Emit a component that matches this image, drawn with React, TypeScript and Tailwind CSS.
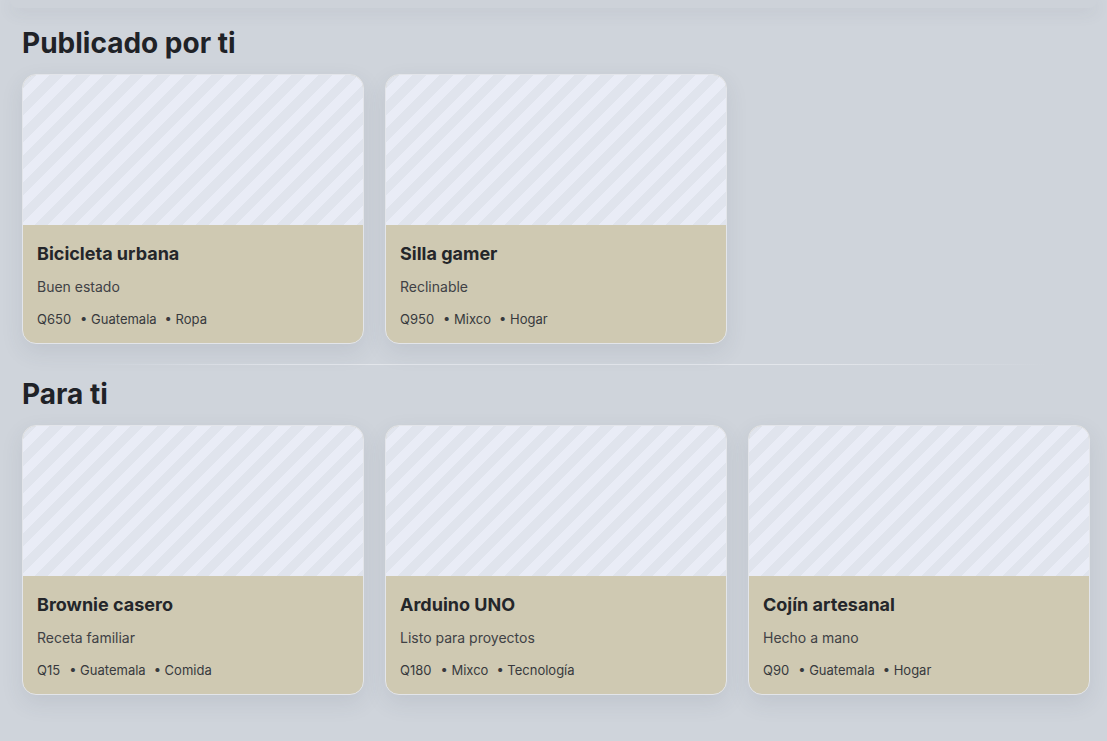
type Item = {
  title: string;
  desc: string;
  price: string;
  city: string;
  cat: string;
};

const mine: Item[] = [
  { title: "Bicicleta urbana", desc: "Buen estado", price: "Q650", city: "Guatemala", cat: "Ropa" },
  { title: "Silla gamer", desc: "Reclinable", price: "Q950", city: "Mixco", cat: "Hogar" },
];

const forYou: Item[] = [
  { title: "Brownie casero", desc: "Receta familiar", price: "Q15", city: "Guatemala", cat: "Comida" },
  { title: "Arduino UNO", desc: "Listo para proyectos", price: "Q180", city: "Mixco", cat: "Tecnología" },
  { title: "Cojín artesanal", desc: "Hecho a mano", price: "Q90", city: "Guatemala", cat: "Hogar" },
];

const ProductCard = ({ item }: { item: Item }) => (
  <div className="overflow-hidden rounded-[14px] border border-[#e3e5ea] bg-[#cfc9b2] shadow-[0_8px_22px_rgba(60,70,90,0.10)]">
    <div className="h-[150px] bg-[repeating-linear-gradient(135deg,#e0e4ed_0px,#e0e4ed_9.5px,#e9ecf6_9.5px,#e9ecf6_19px)]" />
    <div className="px-[14px] pt-[18px] pb-[15px]">
      <div className="text-[18px] leading-[22px] font-bold text-[#24262a]">{item.title}</div>
      <div className="mt-[12px] text-[14px] leading-[20px] text-[#404145]">{item.desc}</div>
      <div className="mt-[13px] flex items-center gap-[8px] text-[13px] leading-[18px] text-[#37393d]">
        <span className="mr-px">{item.price}</span>
        <span>• {item.city}</span>
        <span>• {item.cat}</span>
      </div>
    </div>
  </div>
);

const Section = ({ title, items }: { title: string; items: Item[] }) => (
  <section>
    <h2 className="text-[28px] leading-[34px] font-bold text-[#1f2227]">{title}</h2>
    <div className="mt-[14px] grid grid-cols-3 gap-[21px]">
      {items.map((it) => (
        <ProductCard key={it.title} item={it} />
      ))}
    </div>
  </section>
);

export default function App() {
  return (
    <div className="min-h-[741px] bg-[#cfd4db] font-['Inter',sans-serif]">
      <div className="mx-[10px] h-[8px] rounded-b-[18px] bg-[#cdd2d9] shadow-[0_4px_16px_rgba(80,90,110,0.12)]" />
      <div className="pl-[22px] pr-[17px] pt-[18px] pb-[46px]">
        <Section title="Publicado por ti" items={mine} />
        <div className="mt-[20px] mb-[12px] h-px bg-[linear-gradient(90deg,transparent_6%,#e3e6eb_25%,#e3e6eb_75%,transparent_96%)]" />
        <Section title="Para ti" items={forYou} />
      </div>
    </div>
  );
}
